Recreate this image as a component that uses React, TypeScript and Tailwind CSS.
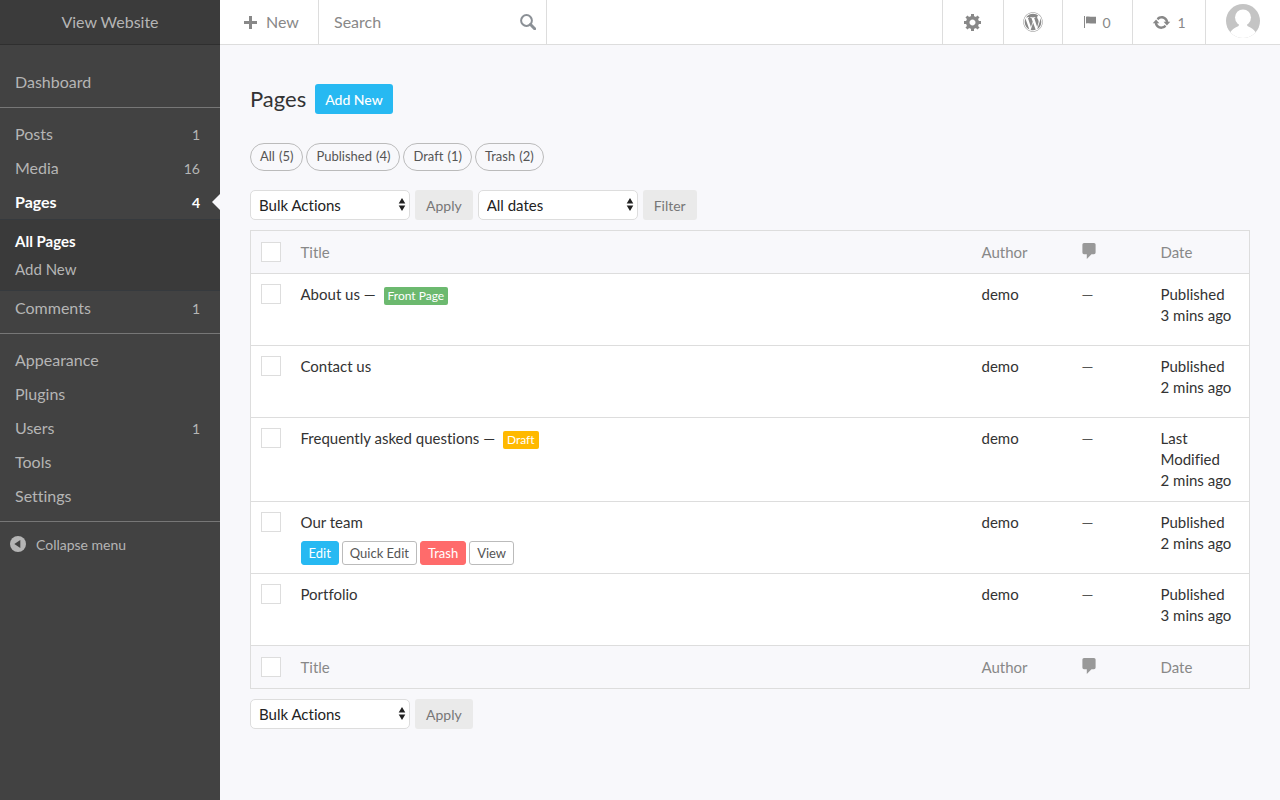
import React from "react";
import { FaWordpress } from "react-icons/fa";

type NavItem = { label: string; count?: number; children?: string[] };

const navGroups: NavItem[][] = [
  [{ label: "Dashboard" }],
  [
    { label: "Posts", count: 1 },
    { label: "Media", count: 16 },
    { label: "Pages", count: 4, children: ["All Pages", "Add New"] },
    { label: "Comments", count: 1 },
  ],
  [
    { label: "Appearance" },
    { label: "Plugins" },
    { label: "Users", count: 1 },
    { label: "Tools" },
    { label: "Settings" },
  ],
];

const filters = [
  { label: "All", count: 5 },
  { label: "Published", count: 4 },
  { label: "Draft", count: 1 },
  { label: "Trash", count: 2 },
];

const pages = [
  { title: "About us", badge: "Front Page", badgeClass: "bg-[#6cb96f]", status: "Published", time: "3 mins ago" },
  { title: "Contact us", status: "Published", time: "2 mins ago" },
  { title: "Frequently asked questions", badge: "Draft", badgeClass: "bg-[#ffb900]", status: "Last Modified", time: "2 mins ago" },
  { title: "Our team", status: "Published", time: "2 mins ago", actions: true },
  { title: "Portfolio", status: "Published", time: "3 mins ago" },
];

const GearIcon = () => (
  <svg viewBox="0 0 20 20" className="h-5 w-5" fill="currentColor" aria-hidden="true">
    <path d="M18 12h-2.18c-.17.7-.44 1.35-.81 1.93l1.54 1.54-2.1 2.1-1.54-1.54c-.58.36-1.23.63-1.91.79V19H8v-2.18c-.68-.16-1.33-.43-1.91-.79l-1.54 1.54-2.12-2.12 1.54-1.54c-.36-.58-.63-1.23-.79-1.91H1V9.03h2.17c.16-.7.44-1.35.8-1.94L2.43 5.55l2.1-2.1 1.54 1.54c.58-.37 1.24-.64 1.93-.81V2h3v2.18c.68.16 1.33.43 1.91.79l1.54-1.54 2.12 2.12-1.54 1.54c.36.59.64 1.24.8 1.94H18V12zm-8.5 1.5c1.66 0 3-1.34 3-3s-1.34-3-3-3-3 1.34-3 3 1.34 3 3 3z" />
  </svg>
);

const FlagIcon = () => (
  <svg viewBox="0 0 12 12" className="h-3 w-3" fill="currentColor" aria-hidden="true">
    <path d="M0 0h1v12H0zM2 .7c3-.5 6 .4 10 0v6.800c-4 .4-7-.5-10 0z" />
  </svg>
);

const UpdateIcon = () => (
  <svg viewBox="0 0 20 20" className="h-[19px] w-[19px]" fill="currentColor" aria-hidden="true">
    <path d="M10.2 3.28c3.53 0 6.43 2.61 6.92 6h2.08l-3.5 4-3.5-4h2.32c-.45-1.97-2.21-3.45-4.32-3.45-1.45 0-2.73.71-3.54 1.78L4.95 5.66C6.23 4.2 8.11 3.28 10.2 3.28zm-.4 13.44c-3.52 0-6.43-2.61-6.92-6H.8l3.5-4c1.17 1.33 2.33 2.67 3.5 4H5.48c.45 1.97 2.21 3.45 4.32 3.45 1.45 0 2.73-.71 3.54-1.78l1.71 1.95c-1.28 1.46-3.15 2.38-5.25 2.38z" />
  </svg>
);

const CommentIcon = () => (
  <svg viewBox="0 0 14 17" className="block h-[17px] w-[14px]" fill="#999" role="img" aria-label="Comments">
    <path d="M2 0h10a1.600 1.600 0 0 1 1.600 1.600v8a1.600 1.600 0 0 1-1.600 1.600H9.500L4.800 16v-4.800H2A1.600 1.600 0 0 1 .4 9.600v-8A1.600 1.600 0 0 1 2 0z" />
  </svg>
);

const Avatar = () => (
  <svg viewBox="0 0 34 34" className="h-[34px] w-[34px]" role="img" aria-label="Profile">
    <clipPath id="avatar-clip">
      <circle cx="17" cy="17" r="17" />
    </clipPath>
    <g clipPath="url(#avatar-clip)">
      <rect width="34" height="34" fill="#c4c4c4" />
      <ellipse cx="17" cy="13.500" rx="8" ry="8" fill="#fff" />
      <path d="M12.800 19h8.400v2.500c0 1.500 6.800 2 9 8V34H3.800v-4.500c2.200-6 9-6.500 9-8z" fill="#fff" />
    </g>
  </svg>
);

const Select = ({ id, label, options }: { id: string; label: string; options: string[] }) => (
  <div className="relative w-40">
    <select
      id={id}
      aria-label={label}
      className="block h-[30px] w-full appearance-none rounded-[5px] border border-[#ddd] bg-white pl-2 pr-5 text-[15px] text-[#222]"
    >
      {options.map((option) => (
        <option key={option}>{option}</option>
      ))}
    </select>
    <svg viewBox="0 0 8 13" className="pointer-events-none absolute right-1 top-2 h-[13px] w-2" fill="#222" aria-hidden="true">
      <path d="M4 0l3.300 5.500H.7zM4 13L.7 7.500h6.600z" />
    </svg>
  </div>
);

const GreyButton = ({ children }: { children: React.ReactNode }) => (
  <button type="button" className="h-[30px] rounded-[3px] bg-[#eaeaea] px-[11px] text-[14px] text-[#777]">
    {children}
  </button>
);

const Checkbox = ({ label }: { label: string }) => (
  <input type="checkbox" aria-label={label} className="block h-5 w-5 appearance-none border border-[#ddd] bg-white checked:bg-[#27b9f2]" />
);

const BulkActions = ({ id }: { id: string }) => (
  <>
    <Select id={id} label="Select bulk action" options={["Bulk Actions", "Edit", "Move to Trash"]} />
    <GreyButton>Apply</GreyButton>
  </>
);

const HeadingRow = ({ label }: { label: string }) => (
  <tr className="h-[43px] bg-[#f8f8fb] text-left text-[#888]">
    <td className="w-10 pl-[10px]">
      <Checkbox label={label} />
    </td>
    <th className="px-[10px] font-normal">Title</th>
    <th className="w-[100px] px-[10px] font-normal">Author</th>
    <th className="w-[79px] px-[10px] pb-[2px] font-normal">
      <CommentIcon />
    </th>
    <th className="w-[99px] px-[10px] font-normal">Date</th>
  </tr>
);

const Sidebar = () => (
  <aside className="w-[220px] shrink-0 bg-[#424242] text-[16px] text-[#b5b5b5]">
    <a href="#site" className="flex h-[45px] items-center justify-center border-b border-[#2f2f2f] bg-[#3b3b3b]">
      View Website
    </a>
    <nav className="pt-[11px]">
      {navGroups.map((group, i) => (
        <ul key={i} className="border-b border-[#777] pb-2 pt-[9px]">
          {group.map((item) => (
            <li key={item.label}>
              <a
                href="#menu"
                className={`relative flex h-[34px] items-center justify-between pl-[15px] pr-5 ${item.children ? "font-bold text-white" : ""}`}
              >
                <span>{item.label}</span>
                {item.count && <span className="text-[14px]">{item.count}</span>}
                {item.children && (
                  <span className="absolute right-0 top-[9px] border-y-8 border-r-8 border-y-transparent border-r-[#f8f8fb]" />
                )}
              </a>
              {item.children && (
                <ul className="border-y border-[#363a3e] bg-[#3a3a3a] py-[7px] text-[15px]">
                  {item.children.map((child, n) => (
                    <li key={child}>
                      <a href="#submenu" className={`flex h-7 items-center px-[15px] ${n === 0 ? "font-bold text-white" : ""}`}>
                        {child}
                      </a>
                    </li>
                  ))}
                </ul>
              )}
            </li>
          ))}
        </ul>
      ))}
    </nav>
    <button type="button" className="flex h-11 items-center gap-[10px] pl-[10px] text-[14px]">
      <svg viewBox="0 0 16 16" className="h-4 w-4" aria-hidden="true">
        <circle cx="8" cy="8" r="8" fill="#b5b5b5" />
        <path d="M10.300 4v8L4.300 8z" fill="#424242" />
      </svg>
      Collapse menu
    </button>
  </aside>
);

const TopBar = () => (
  <header className="flex h-[45px] border-b border-[#ddd] bg-white text-[#888]">
    <button type="button" className="flex w-[99px] items-center gap-[9px] border-r border-[#ddd] pl-6 text-[16px]">
      <svg viewBox="0 0 13 13" className="h-[13px] w-[13px]" fill="currentColor" aria-hidden="true">
        <path d="M5 0h3v5h5v3H8v5H5V8H0V5h5z" />
      </svg>
      New
    </button>
    <div className="flex w-[228px] items-center border-r border-[#ddd] pl-[15px] pr-[10px]">
      <input
        type="search"
        aria-label="Search"
        placeholder="Search"
        className="min-w-0 flex-1 bg-transparent text-[16px] outline-none placeholder:text-[#888]"
      />
      <button type="button" aria-label="Submit search">
        <svg viewBox="0 0 16 16" className="h-4 w-4" fill="none" stroke="#8b9096" aria-hidden="true">
          <circle cx="6.500" cy="6.500" r="5.400" strokeWidth="2" />
          <path d="M10.500 10.500l4.200 4.200" strokeWidth="3" strokeLinecap="round" />
        </svg>
      </button>
    </div>
    <div className="ml-auto flex text-[14px]">
      <button type="button" aria-label="Settings" className="flex w-[61px] items-center justify-center border-l border-[#ddd]">
        <GearIcon />
      </button>
      <button type="button" aria-label="WordPress" className="flex w-[59px] items-center justify-center border-l border-[#ddd]">
        <FaWordpress className="h-5 w-5" />
      </button>
      <button type="button" aria-label="Flags" className="flex w-[70px] items-center justify-center gap-[6px] border-l border-[#ddd]">
        <FlagIcon />
        <span>0</span>
      </button>
      <button type="button" aria-label="Updates" className="flex w-[73px] items-center justify-center gap-[6px] border-l border-[#ddd]">
        <UpdateIcon />
        <span>1</span>
      </button>
      <button type="button" aria-label="Account" className="flex w-[75px] justify-center border-l border-[#ddd] pt-1">
        <Avatar />
      </button>
    </div>
  </header>
);

const RowActions = () => (
  <div className="mt-2 flex gap-[3px] text-[13px] leading-[22px] text-[#555]">
    <button type="button" className="rounded-[3px] border border-[#27b9f2] bg-[#27b9f2] px-[7px] text-white">Edit</button>
    <button type="button" className="rounded-[3px] border border-[#bbb] bg-white px-[7px]">Quick Edit</button>
    <button type="button" className="rounded-[3px] border border-[#ff6b6b] bg-[#ff6b6b] px-[7px] text-white">Trash</button>
    <button type="button" className="rounded-[3px] border border-[#bbb] bg-white px-[7px]">View</button>
  </div>
);

const App = () => {
  return (
    <div className="flex min-h-screen bg-[#f8f8fb] font-['Lato','Open_Sans',sans-serif] text-[#333] [font-variant-ligatures:none]">
      <Sidebar />
      <div className="min-w-0 flex-1">
        <TopBar />
        <main className="px-[30px] pt-[39px]">
          <div className="flex items-center gap-[9px]">
            <h1 className="text-[22px] leading-[28px]">Pages</h1>
            <button type="button" className="h-[30px] rounded-[3px] bg-[#27b9f2] px-[10px] text-[14px] font-medium text-white">
              Add New
            </button>
          </div>

          <ul className="mt-[29px] flex gap-[3px] text-[13px] text-[#555]">
            {filters.map((filter) => (
              <li key={filter.label}>
                <a href="#filter" className="flex h-7 items-center gap-1 rounded-full border border-[#bbb] px-[9px]">
                  <span>{filter.label}</span>
                  <span>({filter.count})</span>
                </a>
              </li>
            ))}
          </ul>

          <div className="mt-[19px] flex gap-[5px]">
            <BulkActions id="bulk-top" />
            <Select id="dates" label="Filter by date" options={["All dates"]} />
            <GreyButton>Filter</GreyButton>
          </div>

          <table className="mt-[10px] w-full table-fixed border-collapse border border-[#ddd] bg-white text-[15px] leading-[21px]">
            <thead>
              <HeadingRow label="Select all pages" />
            </thead>
            <tbody>
              {pages.map((page) => (
                <tr key={page.title} className="h-[72px] border-t border-[#ddd] align-top">
                  <td className="pl-[10px] pt-[10px]">
                    <Checkbox label={`Select ${page.title}`} />
                  </td>
                  <td className="px-[10px] pt-[10px]">
                    <div>
                      <a href="#edit">{page.title}</a>
                      {page.badge && (
                        <>
                          {" — "}
                          <span className={`ml-1 inline-block rounded-[2px] px-1 align-middle text-[12px] leading-[18px] text-white ${page.badgeClass}`}>
                            {page.badge}
                          </span>
                        </>
                      )}
                    </div>
                    {page.actions && <RowActions />}
                  </td>
                  <td className="px-[10px] pt-[10px]">
                    <a href="#author">demo</a>
                  </td>
                  <td className="px-[10px] pt-[10px] text-[#555]">—</td>
                  <td className="py-[10px] pl-[10px]">
                    <div className="pr-4">{page.status}</div>
                    <div className="whitespace-nowrap">{page.time}</div>
                  </td>
                </tr>
              ))}
            </tbody>
            <tfoot className="border-t border-[#ddd]">
              <HeadingRow label="Select all pages, bottom" />
            </tfoot>
          </table>

          <div className="mt-[10px] flex gap-[5px]">
            <BulkActions id="bulk-bottom" />
          </div>
        </main>
      </div>
    </div>
  );
};

export default App;
